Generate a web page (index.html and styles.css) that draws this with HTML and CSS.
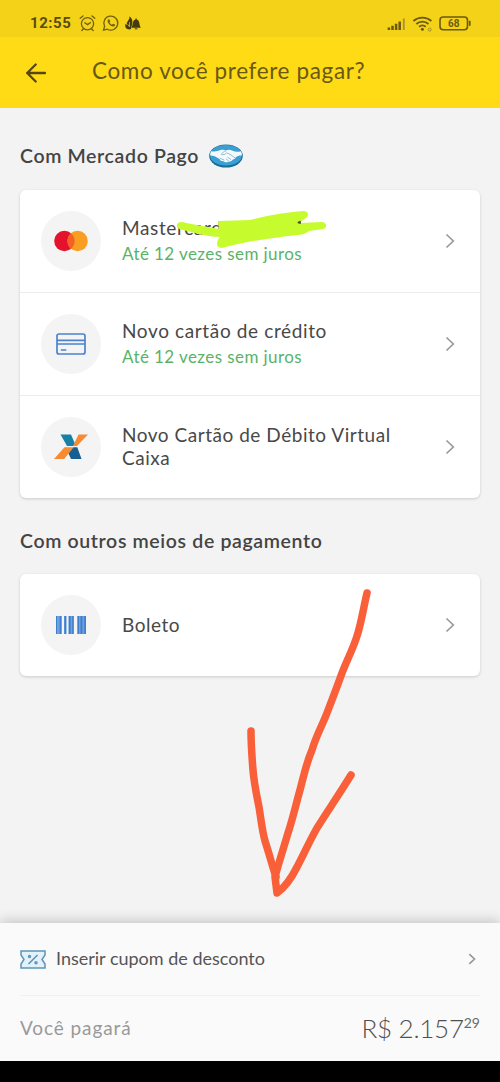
FILE: index.html
```html
<!DOCTYPE html>
<html lang="pt-BR">
<head>
<meta charset="utf-8">
<meta name="viewport" content="width=device-width, initial-scale=1">
<title>Como você prefere pagar?</title>
<link rel="stylesheet" href="styles.css">
</head>
<body>
<div class="screen">
  <div class="status">
    <span class="clock">12:55</span>
    <svg class="status-left" width="66" height="20" viewBox="0 0 66 20" fill="none" stroke="#71600e" stroke-width="1.3" stroke-linecap="round">
      <circle cx="9.5" cy="10.7" r="6.1"/><path d="M2.2 5.3 5 3M16.8 5.3 14 3M5.3 16l-1.5 1.5M13.7 16l1.5 1.5M6.8 9.8l2.7 1.8 2.9-2"/>
      <path d="M25.5 17.2l1.1-3.8a7 7 0 1 1 2.7 2.8z"/>
      <path d="M30 6.5c-1.6 2.5 2.5 7.8 6.2 6.8 1-.5 1-1.4.7-1.7l-1.8-.8-1.2 1c-1-.4-2-1.5-2.4-2.5l.8-1-.8-1.9z" fill="#71600e" stroke="none"/>
      <path d="M51.500 3.200c2.800 2.200 3.500 5 2.500 8.500l-1.200 4.600c-4 .8-6.500-1.800-5.300-5.500l1.200 1.500c-.2-2 .3-3.200 1.500-4.800.9-1.200 1.500-2.600 1.300-4.300z" fill="#443b12" stroke="none"/>
      <path d="M49.800 11.500l1.700 2.300V9.500" stroke="#d8bd1c" stroke-width=".8"/>
      <path d="M53.200 14.700c2-1.600.8-7.600 4.300-8.300V5.500h1.200v.9c3.500.7 2.300 6.700 4.300 8.300z" fill="#443b12" stroke="none"/><path d="M56.700 15.300h2.800v1h-2.800z" fill="#443b12" stroke="none"/>
    </svg>
    <svg class="status-right" width="88" height="20" viewBox="0 0 88 20" fill="none" stroke="#6b5a13" stroke-width="1.8">
      <path d="M4.900 14.500v2.500M8.500 12.700v4.300M12.100 10.700v6.300M15.700 8.500v8.500" stroke-width="2.500"/><path d="M19.800 5.500v11.500" stroke="#a79130" stroke-width="1.800"/>
      <path d="M29.400 8c5.200-4.500 12.800-4.500 18 0M32.300 11c3.500-3.100 8.700-3.100 12.200 0M35.100 13.800c2-1.700 4.600-1.700 6.600 0"/><circle cx="38.400" cy="16.200" r="1.500" fill="#6b5a13" stroke="none"/><circle cx="45.700" cy="16.600" r="1.500" stroke="#a89024" stroke-width="1"/>
      <rect x="56" y="4" width="27.500" height="12.800" rx="3.200" stroke-width="1.600"/><path d="M85.700 7.800v5"/>
      <text class="battery" x="69.800" y="14.100" text-anchor="middle">68</text>
    </svg>
  </div>

  <header class="appbar">
    <svg width="20" height="20" viewBox="0 0 20 20" fill="none" stroke="#554714" stroke-width="2.3" stroke-linecap="round" stroke-linejoin="round"><path d="M19 10H1.300M9.700 1.500 1.200 10l8.500 8.500"/></svg>
    <h1 class="title">Como você prefere pagar?</h1>
  </header>

  <main class="content">
    <h2 class="section"><span class="section-mp">Com Mercado Pago</span>
      <svg width="34" height="24" viewBox="0 0 34 24">
        <ellipse cx="17" cy="12" rx="16.800" ry="11.500" fill="#1a6d96"/><ellipse cx="17" cy="11.300" rx="16" ry="10.300" fill="#3b9fd5"/>
        <path d="M2.200 7.200c3.400.7 6.300.2 9.500-1.100 2-.8 3.700-.4 5.300.4 2-.9 4-.9 6 0 3 1.300 5.800 1.600 8.800.7 1.200 1.900 1.300 3.300.8 4.300-2.300-.4-4 .4-5.600 1.500-.6 1.700-1.800 2.400-3.100 2.600-1.300 1.700-2.700 2.300-4.400 2.200-2 1.200-4.200.3-5.500-.8-1.800.3-3-.8-3.400-2C7.400 13 5.200 11.700 1.400 11.500c-.3-1.500 0-2.900.8-4.300z" fill="#f4f9fb"/>
        <path d="M17 6.800c-2 .7-3.900 2-4.700 3.600 2 .9 4-.2 5.200-1.500 3.200.8 6 3.200 8.900 5.300M10.500 15.200c1.300-1.400 2-.8 2.500.4 1.200-.8 1.900-.1 2 1M18.500 13l3.500 2.500M16.800 14.800l3 2.300" fill="none" stroke="#69a5c4" stroke-width=".7"/>
      </svg>
    </h2>
    <section class="card">
      <div class="row">
        <span class="disc"><svg width="34" height="22" viewBox="0 0 34 22"><circle cx="10.400" cy="11" r="10.200" fill="#e5122d"/><circle cx="23.600" cy="11" r="10.200" fill="#f99d23"/><path d="M17 3.200a10.200 10.200 0 0 1 0 15.600 10.200 10.200 0 0 1 0-15.600z" fill="#f46124"/></svg></span>
        <div class="label"><span class="name">Mastercard</span><span class="hint">Até 12 vezes sem juros</span></div>
        <svg class="chevron" width="10" height="16" viewBox="0 0 10 16"><path d="M1.500 1.500 8.300 8 1.500 14.500"/></svg>
      </div>
      <div class="row">
        <span class="disc"><svg width="30" height="22" viewBox="0 0 30 22" fill="none" stroke="#4b83ce" stroke-width="1.700"><rect x="1" y="1" width="28" height="20" rx="2"/><path d="M1 7.300h28M1 11h28M4.800 17h5.500"/></svg></span>
        <div class="label"><span class="name">Novo cartão de crédito</span><span class="hint">Até 12 vezes sem juros</span></div>
        <svg class="chevron" width="10" height="16" viewBox="0 0 10 16"><path d="M1.500 1.500 8.300 8 1.500 14.500"/></svg>
      </div>
      <div class="row">
        <span class="disc"><svg width="34" height="26" viewBox="0 0 34 26"><path d="M6.500.5H17l5 11.500h-9z" fill="#1680a6"/><path d="M24.500.5H34L23 12h-4z" fill="#f68b32"/><path d="M10.500 13.300h9L10.200 25H0z" fill="#f68b32"/><path d="M19.500 13.300h3.800L27.500 25H17l-2.500-5.500z" fill="#175e91"/></svg></span>
        <div class="label"><span class="name name-tight">Novo Cartão de Débito Virtual<br>Caixa</span></div>
        <svg class="chevron" width="10" height="16" viewBox="0 0 10 16"><path d="M1.500 1.500 8.300 8 1.500 14.500"/></svg>
      </div>
    </section>

    <h2 class="section section-other">Com outros meios de pagamento</h2>
    <section class="card">
      <div class="row">
        <span class="disc"><svg width="30" height="18" viewBox="0 0 30 18"><path d="M0 0h5.500v18H0zM8 0h2.500v18H8zM12.700 0h5v18h-5zM21.500 0H30v18h-8.500z" fill="#6fa1df"/><path d="M0 0h1v18H0zM3.700 0h1.800v18H3.700zM8.500 0h1.600v18H8.500zM12.700 0h1.900v18h-1.900zM16.200 0h1.500v18h-1.500zM21.500 0h1.500v18h-1.500zM24.500 0h1.900v18h-1.900zM28.300 0H30v18h-1.700z" fill="#3f7ecd"/></svg></span>
        <div class="label"><span class="name name-tight">Boleto</span></div>
        <svg class="chevron" width="10" height="16" viewBox="0 0 10 16"><path d="M1.500 1.500 8.300 8 1.500 14.500"/></svg>
      </div>
    </section>
  </main>

  <footer class="footer">
    <div class="coupon">
      <svg width="26" height="19" viewBox="0 0 26 19" fill="#e2f2fb" stroke="#5d94b8" stroke-width="1.500"><path d="M1 1h24v4l-3 4.500 3 4.500v4H1v-4l3-4.500L1 5z"/><path d="M8.500 14 17.500 5" stroke-width="1.600"/><circle cx="9.500" cy="6.500" r="1"/><circle cx="16" cy="12.700" r="1"/></svg>
      <span class="coupon-text">Inserir cupom de desconto</span>
      <svg class="chevron" width="8" height="12" viewBox="0 0 8 12"><path d="M1.300 1.200 6.500 6 1.300 10.800"/></svg>
    </div>
    <div class="total">
      <span class="total-label">Você pagará</span>
      <span class="price"><span class="amount">R$ 2.157</span><span class="cents">29</span></span>
    </div>
  </footer>
  <div class="navbar"></div>

  <svg class="drawing" width="500" height="1082" viewBox="0 0 500 1082" fill="none" stroke-linecap="round" stroke-linejoin="round">
    <path d="M178 223q3-2 8 0l33 6-1-8 32-1q26-7 53-9c5 0 6 3 4 6l-8 6 23-1c6 1 5 6 1 7l-14 2q-5 4-12 4c-25 3-50 6-75 13-6 0-6-5-3-10l1-1c-12 0-28-5-41-8q-4-3-1-6z" fill="#c6fb2e"/>
    <path d="M298.500 222.500l1.500-.8v1.300" stroke="#43502f" stroke-width="1.800"/>
    <g stroke="#f95f38" stroke-width="7.500">
      <path d="M367 593C363 610 361 624 357 636 353 649 347 660 342 673 337 687 332 700 327 713 322 726 316 736 312 750 306 764 304 775 300 790 296 804 293 818 288 833 283 850 279 862 275 877L277 893C284 888 292 877 297 867 303 856 309 842 317 828 327 812 340 793 351 775"/>
      <path d="M251 731C251 746 252 757 253 770 254 783 257 797 259 807 261 819 262 830 265 841 269 853 272 865 276 877"/>
    </g>
  </svg>
</div>
</body>
</html>
```
FILE: styles.css
```css
body { margin: 0; background: #f3f3f3; font-family: Lato, "Open Sans", sans-serif; color: #444; }
h1, h2 { margin: 0; }
svg { display: block; flex: none; }
.screen { position: relative; display: flex; flex-direction: column; width: 500px; height: 1082px; overflow: hidden; }
.status { display: flex; align-items: center; box-sizing: border-box; height: 37px; padding: 9px 28px 0 30px; background: #f3d218; }
.clock { width: 48px; font: 700 15px/18px Roboto, sans-serif; letter-spacing: 0.55px; color: #5b4c12; }
.status-right { margin-left: auto; }
.battery { font: 700 10px Roboto, sans-serif; fill: #6b5a13; stroke: none; }
.appbar { display: flex; align-items: center; gap: 46px; box-sizing: border-box; height: 71px; padding: 0 26px; background: #ffdb15; }
.title { margin-top: -3px; font-size: 22.5px; line-height: 30px; font-weight: 400; letter-spacing: 0.63px; color: #695815; white-space: nowrap; }
.content { flex: 1; padding: 34px 20px 0; }
.section { display: flex; align-items: center; gap: 10px; height: 28px; margin-bottom: 20px; font-size: 19.5px; line-height: 28px; font-weight: 600; letter-spacing: 0.64px; color: #444; white-space: nowrap; }
.section-other { margin: 29px 0 19px; }
.card { background: #fff; border-radius: 6px; box-shadow: 0 1px 3px rgba(0, 0, 0, 0.17); }
.row { display: flex; align-items: center; box-sizing: border-box; height: 103px; padding: 0 25px 0 21px; border-bottom: 1px solid #ececec; }
.row:last-child { height: 102px; border-bottom: 0; }
.disc { display: grid; place-items: center; width: 60px; height: 60px; border-radius: 50%; background: #f4f4f4; }
.label { flex: 1; display: flex; flex-direction: column; gap: 3px; padding-left: 21px; white-space: nowrap; }
.name { font-size: 19px; line-height: 23px; letter-spacing: 0.63px; color: #484848; }
.name-tight { margin-top: -2px; letter-spacing: 0.53px; }
.hint { font-size: 17px; line-height: 24px; letter-spacing: 0.42px; color: #5ab267; }
.chevron { fill: none; stroke: #999; stroke-width: 1.7; }
.footer { height: 138px; background: #fafafa; box-shadow: 0 -2px 12px rgba(0, 0, 0, 0.2); }
.coupon { display: flex; align-items: center; gap: 10px; box-sizing: border-box; height: 73px; margin: 0 20px; padding-right: 4px; border-bottom: 1px solid #f1f1f1; }
.coupon-text { flex: 1; margin-top: -2px; font-size: 18px; color: #555; white-space: nowrap; }
.total { display: flex; align-items: center; justify-content: space-between; height: 65px; padding: 0 20px; }
.total-label { margin-top: -2px; font-size: 19px; letter-spacing: 0.9px; color: #999; }
.price { display: flex; align-items: flex-start; margin-top: -2px; color: #505050; }
.amount { font-size: 26px; line-height: 34px; font-weight: 300; letter-spacing: -0.25px; }
.cents { font-size: 14px; line-height: 24px; color: #6a6a6a; }
.navbar { height: 21px; background: #000; position: relative; }
.drawing { position: absolute; left: 0; top: 0; pointer-events: none; }
```
